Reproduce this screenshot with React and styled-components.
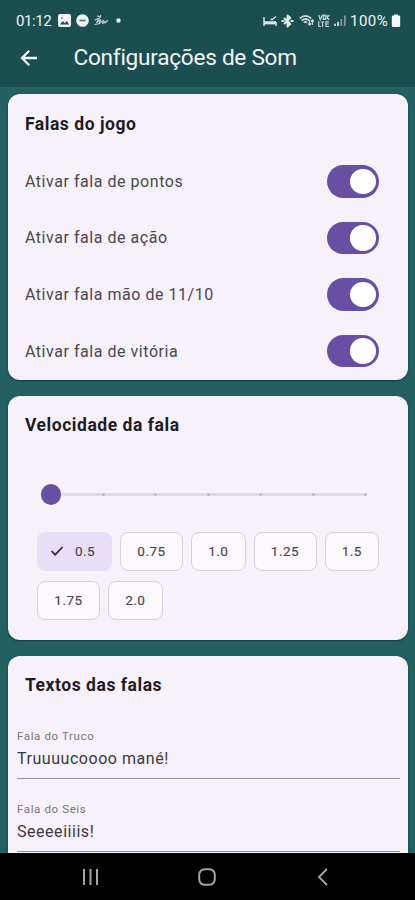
import React, { useState } from 'react'
import styled, { createGlobalStyle } from 'styled-components'

const GlobalStyle = createGlobalStyle`
* { box-sizing: border-box; }
body {
  margin: 0;
  background: #226062;
  font-family: Roboto, sans-serif;
  overflow: hidden;
}
`

const Screen = styled.div`
display: flex;
flex-direction: column;
width: 415px;
height: 900px;
overflow: hidden;
background: #226062;
`

const Header = styled.header`
flex: none;
height: 87px;
background: #1b4e50;
color: #f1f5f5;
`

const StatusBar = styled.div`
display: flex;
align-items: center;
justify-content: space-between;
height: 41px;
padding: 0 14px 0 16px;
`

const StatusIcons = styled.div`
display: flex;
align-items: center;

svg {
  display: block;
}
`

const Clock = styled.span`
width: 42px;
font-size: 15px;
line-height: 20px;
letter-spacing: -0.4px;
`

const Battery = styled.span`
width: 40px;
margin-left: 3px;
font-size: 15px;
line-height: 20px;
letter-spacing: 0.45px;
`

const AppBar = styled.div`
display: flex;
align-items: center;
height: 34px;
padding-left: 20px;
`

const BackButton = styled.button`
display: flex;
padding: 0;
border: 0;
background: none;
color: inherit;
cursor: pointer;
`

const Title = styled.h1`
margin: 0 0 0 35.5px;
font-size: 22.6px;
font-weight: 400;
line-height: 30px;
letter-spacing: -0.26px;
white-space: nowrap;
`

const Content = styled.main`
display: flex;
flex: 1;
flex-direction: column;
gap: 16px;
min-height: 0;
padding: 7px 7px 0 8px;
overflow: hidden;
`

const Card = styled.section`
flex: none;
height: ${props => props.$height}px;
border-radius: 12px;
background: #f7f2fa;
box-shadow: 0 1px 2px rgba(0, 30, 32, 0.55);
`

const CardTitle = styled.h2`
margin: 0;
padding: ${props => props.$top || 17.5}px 17px 0;
font-size: 17.5px;
font-weight: 700;
line-height: 24px;
letter-spacing: 0.54px;
color: #1f1b24;
`

const SwitchList = styled.div`
padding-top: 17.6px;
`

const SwitchRow = styled.label`
display: flex;
align-items: center;
justify-content: space-between;
height: 56.6px;
padding: 0 29px 0 17px;
font-size: 16px;
letter-spacing: 0.54px;
color: #4b4750;
`

const Track = styled.button`
display: flex;
align-items: center;
justify-content: ${props => props.$on ? 'flex-end' : 'flex-start'};
width: 52px;
height: 32.5px;
padding: 0 3.5px;
border: 0;
border-radius: 17px;
background: ${props => props.$on ? '#6750a4' : '#cac4d0'};
cursor: pointer;
`

const Knob = styled.span`
width: 25.5px;
height: 25.5px;
border-radius: 50%;
background: #fff;
`

const Slider = styled.div`
display: flex;
align-items: center;
height: 20px;
margin: 47.5px 41px 0 32.5px;
`

const Thumb = styled.span`
flex: none;
width: 20.5px;
height: 20.5px;
border-radius: 50%;
background: #6750a4;
`

const Rail = styled.div`
display: flex;
flex: 1;
align-items: center;
justify-content: space-between;
height: 3px;
padding-left: 41px;
border-radius: 2px;
background: #e0dce3;
`

const Tick = styled.span`
width: 3px;
height: 3px;
border-radius: 50%;
background: #c2bec7;
`

const Chips = styled.div`
display: flex;
flex-wrap: wrap;
gap: 10px 8px;
padding: 27px 20px 0 29px;
`

const Chip = styled.button`
display: flex;
align-items: center;
justify-content: center;
gap: 11px;
width: ${props => props.$width}px;
height: 39px;
padding: 0 ${props => props.$selected ? 4 : 0}px 0 0;
border: 1px solid ${props => props.$selected ? '#e8def8' : '#d5d0da'};
border-radius: 8px;
background: ${props => props.$selected ? '#e8def8' : '#fdf8fe'};
color: #49454f;
font-family: inherit;
font-size: 13.5px;
font-weight: 400;
letter-spacing: 0.5px;
-webkit-text-stroke: 0.15px currentColor;
cursor: pointer;
`

const Field = styled.label`
display: block;
height: 73px;
margin: 0 8px 0 9px;
`

const FieldLabel = styled.span`
display: block;
font-size: 11.5px;
line-height: 16px;
letter-spacing: 0.62px;
color: #77727c;
`

const FieldInput = styled.input`
display: block;
width: 100%;
height: 35px;
padding: 0 0 6px;
border: 0;
border-bottom: 1px solid #98939d;
border-radius: 0;
background: none;
color: #3c3841;
font-family: inherit;
font-size: 16px;
letter-spacing: 0.54px;
outline: none;
`

const Fields = styled.div`
padding-top: 31.5px;
`

const NavBar = styled.nav`
display: flex;
flex: none;
align-items: center;
justify-content: space-between;
height: 47px;
padding: 1px 83px 0 82px;
background: #000;
color: #a4a4a4;
`

const Glyph = styled.svg`
flex: none;
margin-left: ${props => props.$gap || 0}px;
`

const LeftStatus = () => (
    <StatusIcons>
        <Clock>01:12</Clock>
        <Glyph width="13" height="13" viewBox="0 0 13 13">
            <rect width="13" height="13" rx="2" fill="#f0f2f3" />
            <path d="M2 10.5 4.8 7l2 2.3L8.8 7l2.3 3.5z" fill="#1b4e50" />
            <circle cx="4" cy="4" r="1" fill="#7a9495" />
        </Glyph>
        <Glyph $gap={5} width="13" height="13" viewBox="0 0 13 13">
            <circle cx="6.5" cy="6.5" r="6.3" fill="#f0f2f3" />
            <path d="M3.5 6.5h6" stroke="#5e7778" strokeWidth="1.7" />
        </Glyph>
        <Glyph $gap={5} width="15" height="13" viewBox="0 0 15 13" fill="none" stroke="#c5d0d1" strokeWidth="1.1" strokeLinecap="round" strokeLinejoin="round">
            <path d="m1 6 3-1.5M3.5 2 6 3 2.5 8.5l4-2.8L5 9.8l4.3-3.6L8.7 9.5l2.2-2.2v1.7l2.8-2.5M1 10.5l4.5-1M6.5 1.2v2" />
        </Glyph>
        <Glyph $gap={7} width="5" height="5" viewBox="0 0 5 5">
            <rect x=".5" y=".5" width="4" height="4" rx="1" fill="#f0f2f3" />
        </Glyph>
    </StatusIcons>
)

const RightStatus = () => (
    <StatusIcons>
        <Glyph width="14" height="13" viewBox="0 0 14 13" stroke="#dce4e4" fill="none">
            <path d="M1 3v9M13 8v4" strokeWidth="1.5" />
            <path d="M1 8.8h12" strokeWidth="3.2" />
            <path d="m7.5 4.7 1.5 1.1L13 2.6" strokeWidth="1.3" />
        </Glyph>
        <Glyph $gap={4} width="13" height="14" viewBox="0 0 13 14" fill="none" stroke="#e4eaea" strokeWidth="1.9">
            <path d="m3 4 6.3 6-2.8 2.5v-11L9.3 4 3 10" strokeLinejoin="round" />
            <path d="M1.2 7h1.5M10.3 7h1.5" strokeWidth="2" strokeLinecap="round" />
        </Glyph>
        <Glyph $gap={5} width="16" height="13" viewBox="0 0 16 13" fill="none" stroke="#d3dcdc" strokeWidth="1.7">
            <path d="M.8 4.3Q6.5-.5 12.2 4.3M2.8 6.5q3.7-3 7.4 0M4.8 8.6q1.7-1.3 3.4 0" />
            <path d="m9 9.4 1.6 1.8 1.6-1.8M10.6 6.2v4.5M13.4 11V6M12 7.5l1.4-1.6 1.4 1.6" strokeWidth="1.2" />
        </Glyph>
        <Glyph $gap={3} width="12" height="14" viewBox="0 0 12 14" fill="none" stroke="#cbd6d6" strokeWidth="1.2">
            <path d="m.7 1 1.6 4.8L4.2 1M5.3 1.2h2v4.2h-2zM9 1v4.6M11.4 1 9.2 3.4l2.2 2.4M.8 7.3v5.2h2M4.5 13V7.8M2.9 8h3.5M11 7.8H8v4.7h3.2M8 10h2.8" />
        </Glyph>
        <Glyph $gap={4} width="13" height="13" viewBox="0 0 13 13">
            <path d="M1 12V9.8M4 12V7.8" stroke="#d9e1e1" strokeWidth="1.8" />
            <path d="M7.3 12V5M10.8 12V1.5" stroke="#839b9d" strokeWidth="1.7" />
        </Glyph>
        <Battery>100%</Battery>
        <Glyph $gap={1} width="10" height="14" viewBox="0 0 10 14">
            <path d="M3 .5h4v1h1q1.2 0 1.2 1.2v9q0 1.3-1.3 1.3H2.1Q.8 13 .8 11.7v-9Q.8 1.5 2 1.5h1z" fill="#f4f7f7" />
        </Glyph>
    </StatusIcons>
)

const switches = [
    'Ativar fala de pontos',
    'Ativar fala de ação',
    'Ativar fala mão de 11/10',
    'Ativar fala de vitória',
]

const speeds = [
    { value: '0.5', width: 75 },
    { value: '0.75', width: 63 },
    { value: '1.0', width: 54.5 },
    { value: '1.25', width: 63 },
    { value: '1.5', width: 54.5 },
    { value: '1.75', width: 63 },
    { value: '2.0', width: 54.5 },
]

const SpeechSwitch = ({ text }) => {
    const [on, setOn] = useState(true)
    return (
        <SwitchRow>
            {text}
            <Track $on={on} onClick={() => setOn(!on)}><Knob /></Track>
        </SwitchRow>
    )
}

const App = () => {
    const [speed, setSpeed] = useState('0.5')
    return (
        <>
            <GlobalStyle />
            <Screen>
                <Header>
                    <StatusBar>
                        <LeftStatus />
                        <RightStatus />
                    </StatusBar>
                    <AppBar>
                        <BackButton>
                            <svg width="18" height="18" viewBox="0 0 18 18" fill="none" stroke="currentColor" strokeWidth="2.3">
                                <path d="M17 9H2.5M9.2 1.8 2 9l7.2 7.2" />
                            </svg>
                        </BackButton>
                        <Title>Configurações de Som</Title>
                    </AppBar>
                </Header>
                <Content>
                    <Card $height={285.5}>
                        <CardTitle>Falas do jogo</CardTitle>
                        <SwitchList>
                            {switches.map(text => <SpeechSwitch key={text} text={text} />)}
                        </SwitchList>
                    </Card>
                    <Card $height={244.5}>
                        <CardTitle>Velocidade da fala</CardTitle>
                        <Slider>
                            <Thumb />
                            <Rail>
                                <Tick /><Tick /><Tick /><Tick /><Tick /><Tick />
                            </Rail>
                        </Slider>
                        <Chips>
                            {speeds.map(({ value, width }) => (
                                <Chip key={value} $width={width} $selected={speed === value} onClick={() => setSpeed(value)}>
                                    {speed === value &&
                                        <svg width="14" height="12" viewBox="0 0 14 12" fill="none" stroke="#2c2535" strokeWidth="1.7">
                                            <path d="m1.5 6 3.7 3.7L12.5 2" />
                                        </svg>}
                                    {value}
                                </Chip>
                            ))}
                        </Chips>
                    </Card>
                    <Card $height={330}>
                        <CardTitle $top={16.5}>Textos das falas</CardTitle>
                        <Fields>
                            <Field>
                                <FieldLabel>Fala do Truco</FieldLabel>
                                <FieldInput defaultValue="Truuuucoooo mané!" />
                            </Field>
                            <Field>
                                <FieldLabel>Fala do Seis</FieldLabel>
                                <FieldInput defaultValue="Seeeeiiiis!" />
                            </Field>
                        </Fields>
                    </Card>
                </Content>
                <NavBar>
                    <svg width="17" height="18" viewBox="0 0 17 18" stroke="currentColor" strokeWidth="2">
                        <path d="M2 1v16M8.5 1v16M15 1v16" />
                    </svg>
                    <svg width="18" height="18" viewBox="0 0 18 18" fill="none" stroke="currentColor" strokeWidth="2">
                        <rect x="1.2" y="1.2" width="15.6" height="15.6" rx="5.5" />
                    </svg>
                    <svg width="17" height="18" viewBox="0 0 17 18" fill="none" stroke="currentColor" strokeWidth="1.9">
                        <path d="M12 1 4 9l8 8" />
                    </svg>
                </NavBar>
            </Screen>
        </>
    )
}

export default App
